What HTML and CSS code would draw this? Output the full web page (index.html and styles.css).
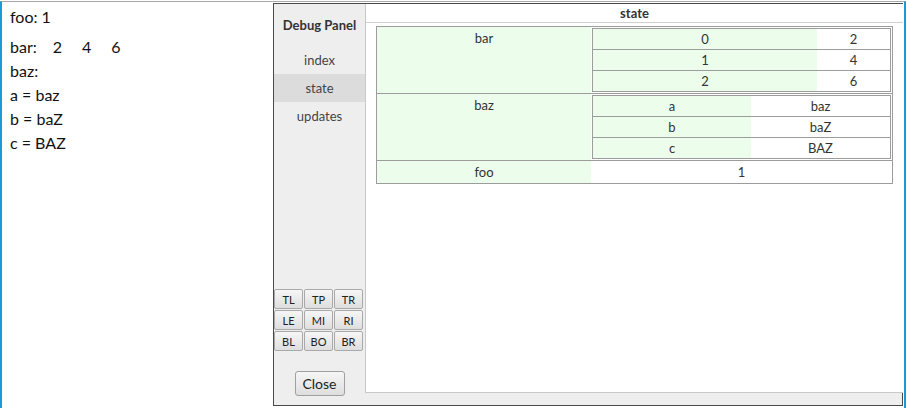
FILE: index.html
```html
<!DOCTYPE html>
<html>
<head>
<meta charset="utf-8">
<link rel="stylesheet" href="styles.css">
</head>
<body>
<div class="frame">
  <div class="output">
    <div class="line">foo: 1</div>
    <div class="line bar-line">bar:<span class="num">2</span><span class="num">4</span><span class="num">6</span></div>
    <div class="line">baz:</div>
    <div class="line">a = baz</div>
    <div class="line">b = baZ</div>
    <div class="line">c = BAZ</div>
  </div>

  <div class="panel">
    <div class="sidebar">
      <div class="title">Debug Panel</div>
      <div class="nav">
        <div class="nav-item">index</div>
        <div class="nav-item active">state</div>
        <div class="nav-item">updates</div>
      </div>
      <div class="pos-grid">
        <button class="pos-btn">TL</button><button class="pos-btn">TP</button><button class="pos-btn">TR</button>
        <button class="pos-btn">LE</button><button class="pos-btn">MI</button><button class="pos-btn">RI</button>
        <button class="pos-btn">BL</button><button class="pos-btn">BO</button><button class="pos-btn">BR</button>
      </div>
      <button class="close-btn">Close</button>
    </div>
    <div class="main">
      <div class="main-header">state</div>
      <table class="state-table">
        <tr>
          <td class="key">bar</td>
          <td class="val">
            <table class="sub sub-bar">
              <tr><td class="skey">0</td><td class="sval">2</td></tr>
              <tr><td class="skey">1</td><td class="sval">4</td></tr>
              <tr><td class="skey">2</td><td class="sval">6</td></tr>
            </table>
          </td>
        </tr>
        <tr>
          <td class="key">baz</td>
          <td class="val">
            <table class="sub sub-baz">
              <tr><td class="skey">a</td><td class="sval">baz</td></tr>
              <tr><td class="skey">b</td><td class="sval">baZ</td></tr>
              <tr><td class="skey">c</td><td class="sval">BAZ</td></tr>
            </table>
          </td>
        </tr>
        <tr>
          <td class="key">foo</td>
          <td class="val plain">1</td>
        </tr>
      </table>
    </div>
  </div>
</div>
</body>
</html>
```

FILE: styles.css
```css
html, body {
  margin: 0;
  padding: 0;
  background: #fff;
}

body {
  font-family: Lato, "Noto Sans", "Liberation Sans", sans-serif;
  color: #222;
}

.frame {
  position: relative;
  box-sizing: border-box;
  margin-top: 1px;
  height: 407px;
  border-top: 1px solid #a8a8a8;
  border-left: 2px solid #1b9ad6;
  border-right: 2px solid #1b9ad6;
}

.output {
  padding: 3px 8px;
  font-size: 16px;
  line-height: 24px;
  color: #111;
}

.bar-line {
  padding-top: 6px;
}

.num {
  margin-left: 20px;
}

.line .num:first-child {
  margin-left: 16px;
}

/* Debug panel overlay */
.panel {
  position: absolute;
  left: 271px;
  top: 1px;
  width: 630px;
  height: 403px;
  box-sizing: border-box;
  border: 1px solid #4a4a4a;
  background: #eeeeee;
  display: flex;
  font-size: 13px;
  color: #333;
}

.sidebar {
  width: 91px;
  flex: none;
  display: flex;
  flex-direction: column;
  align-items: center;
}

.title {
  font-weight: bold;
  line-height: 18px;
  padding: 12px 0 12px;
  color: #333;
}

.nav {
  align-self: stretch;
}

.nav-item {
  height: 28px;
  line-height: 28px;
  text-align: center;
  color: #444;
}

.nav-item.active {
  background: #dcdcdc;
}

.pos-grid {
  margin-top: auto;
  align-self: flex-start;
  display: grid;
  grid-template-columns: repeat(3, 29px);
  grid-auto-rows: 20px;
  gap: 1px;
}

.pos-btn {
  margin: 0;
  padding: 0;
  font-family: inherit;
  font-size: 11px;
  color: #222;
  border: 1px solid #a9a9a9;
  border-radius: 2px;
  background: linear-gradient(#f6f6f6, #dedede);
}

.close-btn {
  margin: 20px 0 9px;
  width: 50px;
  height: 25px;
  padding: 0;
  font-family: inherit;
  font-size: 14px;
  color: #222;
  border: 1px solid #a0a0a0;
  border-radius: 3px;
  background: linear-gradient(#f6f6f6, #dedede);
}

.main {
  flex: 1;
  margin-bottom: 12px;
  background: #fff;
  border-left: 1px solid #c8c8c8;
  border-bottom: 1px solid #c8c8c8;
}

.main-header {
  height: 18px;
  line-height: 18px;
  text-align: center;
  font-weight: bold;
  border-bottom: 1px solid #cfcfcf;
  color: #333;
}

.state-table {
  margin: 3px 10px 0;
  width: 517px;
  border-collapse: collapse;
  table-layout: fixed;
  border: 1px solid #9c9c9c;
}

.state-table > tbody > tr > td {
  border-bottom: 1px solid #9c9c9c;
  padding: 1px;
  text-align: center;
  vertical-align: top;
  line-height: 20px;
}

.state-table > tbody > tr > td.key {
  width: 212px;
  background: #ecfdec;
}

.sub {
  width: 100%;
  border-collapse: collapse;
  table-layout: fixed;
  border: 1px solid #9c9c9c;
}

.sub td {
  padding: 0;
  height: 20px;
  line-height: 20px;
  text-align: center;
  border-bottom: 1px solid #9c9c9c;
}

.sub .skey {
  background: #ecfdec;
}

.sub-bar .skey {
  width: 224px;
}

.sub-baz .skey {
  width: 158px;
}
```
